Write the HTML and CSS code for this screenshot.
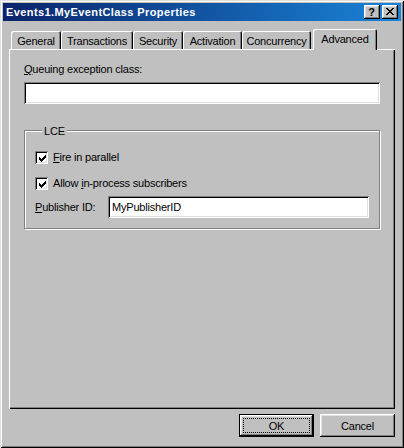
FILE: index.html
```html
<!DOCTYPE html>
<html>
<head>
<meta charset="utf-8">
<link rel="stylesheet" href="styles.css">
</head>
<body>
<div class="window">
  <div class="titlebar">
    <span class="title">Events1.MyEventClass Properties</span>
    <div class="caption-btns">
      <span class="cbtn help">?</span>
      <span class="cbtn close">
        <svg width="8" height="7" viewBox="0 0 8 7" shape-rendering="crispEdges">
          <rect x="0" y="0" width="2" height="1"/><rect x="6" y="0" width="2" height="1"/>
          <rect x="1" y="1" width="2" height="1"/><rect x="5" y="1" width="2" height="1"/>
          <rect x="2" y="2" width="4" height="1"/>
          <rect x="3" y="3" width="2" height="1"/>
          <rect x="2" y="4" width="4" height="1"/>
          <rect x="1" y="5" width="2" height="1"/><rect x="5" y="5" width="2" height="1"/>
          <rect x="0" y="6" width="2" height="1"/><rect x="6" y="6" width="2" height="1"/>
        </svg>
      </span>
    </div>
  </div>
  <div class="content">
    <div class="tabs">
      <div class="tab w-general">General</div>
      <div class="tab w-transactions">Transactions</div>
      <div class="tab w-security">Security</div>
      <div class="tab w-activation">Activation</div>
      <div class="tab w-concurrency">Concurrency</div>
      <div class="tab selected w-advanced">Advanced</div>
    </div>
    <div class="panel">
      <div class="field-label"><u>Q</u>ueuing exception class:</div>
      <div class="textbox wide"></div>
      <div class="group">
        <span class="group-label">LCE</span>
        <div class="check-row first">
          <span class="checkbox">
            <svg width="7" height="7" viewBox="0 0 7 7" shape-rendering="crispEdges">
              <rect x="6" y="0" width="1" height="1"/>
              <rect x="5" y="1" width="2" height="1"/>
              <rect x="0" y="2" width="1" height="1"/><rect x="4" y="2" width="3" height="1"/>
              <rect x="0" y="3" width="2" height="1"/><rect x="3" y="3" width="3" height="1"/>
              <rect x="0" y="4" width="5" height="1"/>
              <rect x="1" y="5" width="3" height="1"/>
              <rect x="2" y="6" width="1" height="1"/>
            </svg>
          </span>
          <span><u>F</u>ire in parallel</span>
        </div>
        <div class="check-row second">
          <span class="checkbox">
            <svg width="7" height="7" viewBox="0 0 7 7" shape-rendering="crispEdges">
              <rect x="6" y="0" width="1" height="1"/>
              <rect x="5" y="1" width="2" height="1"/>
              <rect x="0" y="2" width="1" height="1"/><rect x="4" y="2" width="3" height="1"/>
              <rect x="0" y="3" width="2" height="1"/><rect x="3" y="3" width="3" height="1"/>
              <rect x="0" y="4" width="5" height="1"/>
              <rect x="1" y="5" width="3" height="1"/>
              <rect x="2" y="6" width="1" height="1"/>
            </svg>
          </span>
          <span>Allow <u>i</u>n-process subscribers</span>
        </div>
        <div class="pub-row">
          <span class="pub-label"><u>P</u>ublisher ID:</span>
          <div class="textbox pub">MyPublisherID</div>
        </div>
      </div>
    </div>
    <div class="buttons">
      <button class="btn default">OK</button>
      <button class="btn">Cancel</button>
    </div>
  </div>
</div>
</body>
</html>
```
FILE: styles.css
```css
html, body {
  margin: 0;
  padding: 0;
  background: #c0c0c0;
}
body {
  font-family: "Liberation Sans", Arial, sans-serif;
  font-size: 11px;
  letter-spacing: -0.2px;
  color: #000;
}
.window {
  width: 404px;
  height: 448px;
  box-sizing: border-box;
  padding: 3px;
  display: flex;
  flex-direction: column;
  background: #c0c0c0;
  box-shadow: inset 1px 1px #dfdfdf, inset -1px -1px #000, inset 2px 2px #fff, inset -2px -2px #808080;
}
.titlebar {
  height: 18px;
  flex: none;
  display: flex;
  align-items: center;
  justify-content: space-between;
  padding: 0 3px 0 3px;
  background: linear-gradient(to right, #0a246a, #1a84d8);
  color: #fff;
}
.title {
  font-weight: bold;
  letter-spacing: 0.4px;
  line-height: 13px;
}
.caption-btns {
  display: flex;
  gap: 2px;
}
.cbtn {
  width: 16px;
  height: 14px;
  box-sizing: border-box;
  background: #c0c0c0;
  box-shadow: inset -1px -1px #000, inset 1px 1px #fff, inset -2px -2px #808080, inset 2px 2px #dfdfdf;
  display: flex;
  align-items: center;
  justify-content: center;
  color: #000;
  font-weight: bold;
  font-size: 11px;
  letter-spacing: 0;
  line-height: 12px;
}
.cbtn.help {
  padding: 0 1px 1px 0;
}
.cbtn.close svg {
  fill: #000;
  margin: 0 1px 1px 0;
}
.content {
  flex: 1;
  display: flex;
  flex-direction: column;
  padding: 8px 6px 8px 6px;
}
.tabs {
  display: flex;
  align-items: flex-end;
  height: 20px;
  flex: none;
  padding-left: 2px;
}
.tab {
  height: 18px;
  box-sizing: border-box;
  padding-top: 4px;
  text-align: center;
  line-height: 13px;
  white-space: nowrap;
  background: #c0c0c0;
  border-radius: 2px 2px 0 0;
  box-shadow: inset 1px 1px #fff, inset -1px 0 #000, inset -2px 0 #808080;
}
.tab.selected {
  height: 21px;
  margin-bottom: -1px;
  margin-left: 2px;
  position: relative;
  z-index: 1;
}
.w-general { width: 50px; }
.w-transactions { width: 72px; }
.w-security { width: 50px; }
.w-activation { width: 59px; }
.w-concurrency { width: 69px; }
.w-advanced { width: 64px; }
.panel {
  flex: 1;
  display: flex;
  flex-direction: column;
  padding: 14px 15px 0 15px;
  box-shadow: inset 1px 1px #fff, inset -1px -1px #000, inset -2px -2px #808080;
}
.field-label {
  line-height: 13px;
  height: 13px;
}
.textbox {
  height: 22px;
  box-sizing: border-box;
  background: #fff;
  box-shadow: inset 1px 1px #808080, inset -1px -1px #fff, inset 2px 2px #000, inset -2px -2px #dfdfdf;
}
.textbox.wide {
  margin-top: 6px;
}
.group {
  margin-top: 26px;
  display: flex;
  flex-direction: column;
  border: 1px solid #808080;
  box-shadow: inset 1px 1px #fff, 1px 1px #fff;
  padding: 0 10px 10px 10px;
}
.group-label {
  align-self: flex-start;
  margin: -6px 0 0 7px;
  padding: 0 2px;
  background: #c0c0c0;
  line-height: 13px;
}
.check-row {
  display: flex;
  align-items: center;
  gap: 5px;
  height: 13px;
  line-height: 13px;
}
.check-row.first { margin-top: 13px; }
.check-row.second { margin-top: 13px; }
.checkbox {
  width: 13px;
  height: 13px;
  box-sizing: border-box;
  background: #fff;
  display: flex;
  align-items: center;
  justify-content: center;
  box-shadow: inset 1px 1px #808080, inset -1px -1px #fff, inset 2px 2px #000, inset -2px -2px #dfdfdf;
}
.checkbox svg {
  fill: #000;
  margin: 1px 0 0 1px;
}
.pub-row {
  display: flex;
  align-items: center;
  margin-top: 6px;
}
.pub-label {
  width: 73px;
  flex: none;
  line-height: 13px;
}
.textbox.pub {
  flex: 1;
  padding-left: 4px;
  line-height: 22px;
}
.buttons {
  display: flex;
  justify-content: flex-end;
  gap: 6px;
  margin-top: 5px;
  flex: none;
}
.btn {
  width: 75px;
  height: 23px;
  font: inherit;
  letter-spacing: inherit;
  color: #000;
  border: none;
  padding: 0;
  background: #c0c0c0;
  box-shadow: inset -1px -1px #000, inset 1px 1px #fff, inset -2px -2px #808080, inset 2px 2px #dfdfdf;
}
.btn.default {
  box-shadow: inset 0 0 0 1px #000, inset -2px -2px #000, inset 2px 2px #fff, inset -3px -3px #808080, inset 3px 3px #dfdfdf;
  outline: 1px dotted #000;
  outline-offset: -5px;
}
```
